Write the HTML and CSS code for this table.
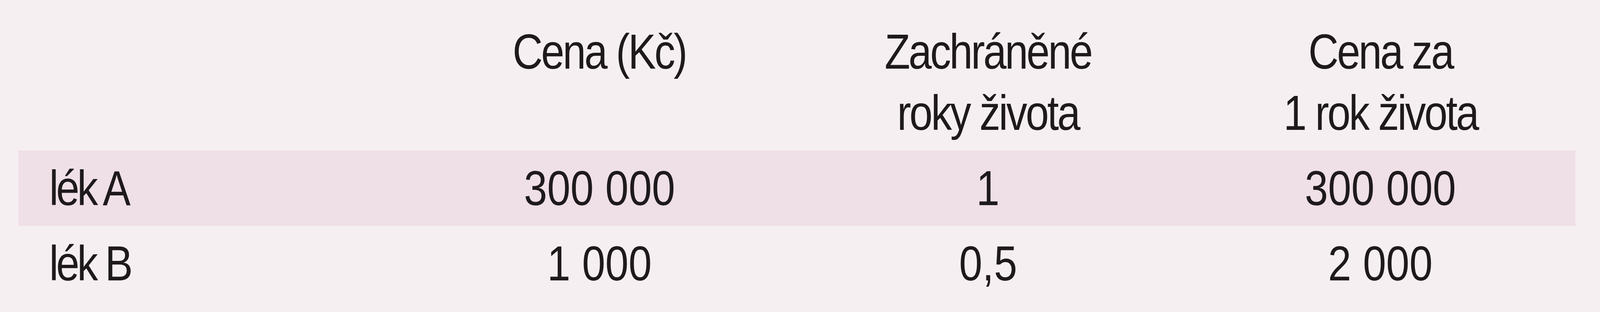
FILE: index.html
```html
<!DOCTYPE html>
<html lang="cs">
<head>
<meta charset="utf-8">
<title>Srovnání léků</title>
<link rel="stylesheet" href="styles.css">
</head>
<body>
<div class="table">
  <div class="row head">
    <div class="cell label"></div>
    <div class="cell"><span class="t">Cena (Kč)</span></div>
    <div class="cell"><span class="t">Zachráněné<br>roky života</span></div>
    <div class="cell"><span class="t">Cena za<br>1 rok života</span></div>
  </div>
  <div class="row body shaded">
    <div class="cell label"><span class="t">lék A</span></div>
    <div class="cell num"><span class="t">300 000</span></div>
    <div class="cell num"><span class="t">1</span></div>
    <div class="cell num"><span class="t">300 000</span></div>
  </div>
  <div class="row body">
    <div class="cell label"><span class="t">lék B</span></div>
    <div class="cell num"><span class="t">1 000</span></div>
    <div class="cell num"><span class="t">0,5</span></div>
    <div class="cell num"><span class="t">2 000</span></div>
  </div>
</div>
</body>
</html>
```
FILE: styles.css
```css
html, body {
  margin: 0;
  padding: 0;
}
body {
  background: #f6eff2;
  min-height: 800px;
  font-family: "Liberation Sans", Arial, sans-serif;
  font-size: 126px;
  color: #1e1a1c;
  overflow: hidden;
}
.table {
  margin-left: 1.1416vw;
  width: 97.322vw;
  display: flex;
  flex-direction: column;
}
.row {
  display: grid;
  grid-template-columns: 1175fr 1150fr 1190fr 1174fr;
}
.cell {
  text-align: center;
  white-space: nowrap;
  letter-spacing: -5px;
}
.t {
  display: inline-block;
  transform: scaleX(0.85);
  transform-origin: center;
}
.cell.label {
  text-align: left;
  padding-left: 1.93vw;
  letter-spacing: -7px;
}
.cell.label .t {
  transform-origin: left center;
}
.cell.num {
  letter-spacing: 0;
}
.head {
  padding-top: 54px;
  padding-bottom: 18px;
  line-height: 157px;
  align-items: start;
}
.body {
  height: 193px;
  align-items: center;
  line-height: normal;
}
.shaded {
  background: #efdfe6;
}
```
